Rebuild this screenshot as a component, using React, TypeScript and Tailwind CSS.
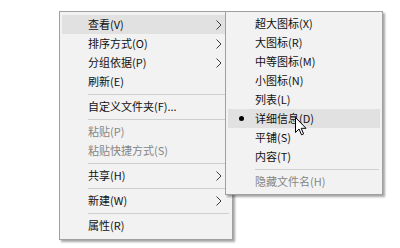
import React from "react";

type Item =
  | { type: "sep" }
  | { type: "item"; label: string; sub?: boolean; disabled?: boolean; active?: boolean; bullet?: boolean };

const mainItems: Item[] = [
  { type: "item", label: "查看(V)", sub: true, active: true },
  { type: "item", label: "排序方式(O)", sub: true },
  { type: "item", label: "分组依据(P)", sub: true },
  { type: "item", label: "刷新(E)" },
  { type: "sep" },
  { type: "item", label: "自定义文件夹(F)..." },
  { type: "sep" },
  { type: "item", label: "粘贴(P)", disabled: true },
  { type: "item", label: "粘贴快捷方式(S)", disabled: true },
  { type: "sep" },
  { type: "item", label: "共享(H)", sub: true },
  { type: "sep" },
  { type: "item", label: "新建(W)", sub: true },
  { type: "sep" },
  { type: "item", label: "属性(R)" },
];

const subItems: Item[] = [
  { type: "item", label: "超大图标(X)" },
  { type: "item", label: "大图标(R)" },
  { type: "item", label: "中等图标(M)" },
  { type: "item", label: "小图标(N)" },
  { type: "item", label: "列表(L)" },
  { type: "item", label: "详细信息(D)", active: true, bullet: true },
  { type: "item", label: "平铺(S)" },
  { type: "item", label: "内容(T)" },
  { type: "sep" },
  { type: "item", label: "隐藏文件名(H)", disabled: true },
];

function Chevron() {
  return (
    <svg width="6" height="10" viewBox="0 0 6 10" className="ml-auto mr-[8px] shrink-0">
      <polyline points="0.5,0.5 5,5 0.5,9.5" fill="none" stroke="#3c3c3c" strokeWidth="1" />
    </svg>
  );
}

function Menu({ items, gutter }: { items: Item[]; gutter: string }) {
  return (
    <div className="flex flex-col">
      {items.map((it, i) =>
        it.type === "sep" ? (
          <div key={i} className="h-[6px] flex items-center">
            <div className={`${gutter} shrink-0`} />
            <div className="h-px bg-[#cfcfcf] flex-1 mr-[1px]" />
          </div>
        ) : (
          <div
            key={i}
            className={`h-[19px] flex items-center ${it.active ? "bg-[#e1e1e1]" : ""} ${
              it.disabled ? "text-[#858585]" : "text-[#111]"
            }`}
          >
            <div className={`${gutter} shrink-0 flex items-center justify-center`}>
              {it.bullet && <div className="w-[5px] h-[5px] rounded-full bg-black" />}
            </div>
            <span className="leading-none whitespace-nowrap">{it.label}</span>
            {it.sub && <Chevron />}
          </div>
        )
      )}
    </div>
  );
}

export default function App() {
  return (
    <div
      className="w-[400px] h-[248px] bg-white overflow-hidden text-[11px] pl-[59px] pt-[11px]"
      style={{ fontFamily: '"Noto Sans CJK SC", "Noto Sans", sans-serif' }}
    >
      <div className="relative w-[174px] h-[229px] bg-[#f2f2f2] border border-[#a0a0a0] px-[2px] pt-[3px] shadow-[2px_2px_2px_rgba(0,0,0,0.35)]">
        <Menu items={mainItems} gutter="w-[26px]" />
        <div className="absolute left-[165px] top-[-1px] w-[158px] h-[184px] bg-[#f2f2f2] border border-[#a0a0a0] px-[2px] pt-[2px] shadow-[2px_2px_2px_rgba(0,0,0,0.35)]">
          <Menu items={subItems} gutter="w-[27px]" />
          <svg className="absolute left-[69px] top-[105px]" width="12" height="19" viewBox="0 0 12 19">
            <path
              d="M0.5,0.5 L0.5,15.5 L4,12 L6.5,17.8 L8.6,16.9 L6.2,11.3 L11,11.3 Z"
              fill="white"
              stroke="black"
              strokeWidth="1"
            />
          </svg>
        </div>
      </div>
    </div>
  );
}
